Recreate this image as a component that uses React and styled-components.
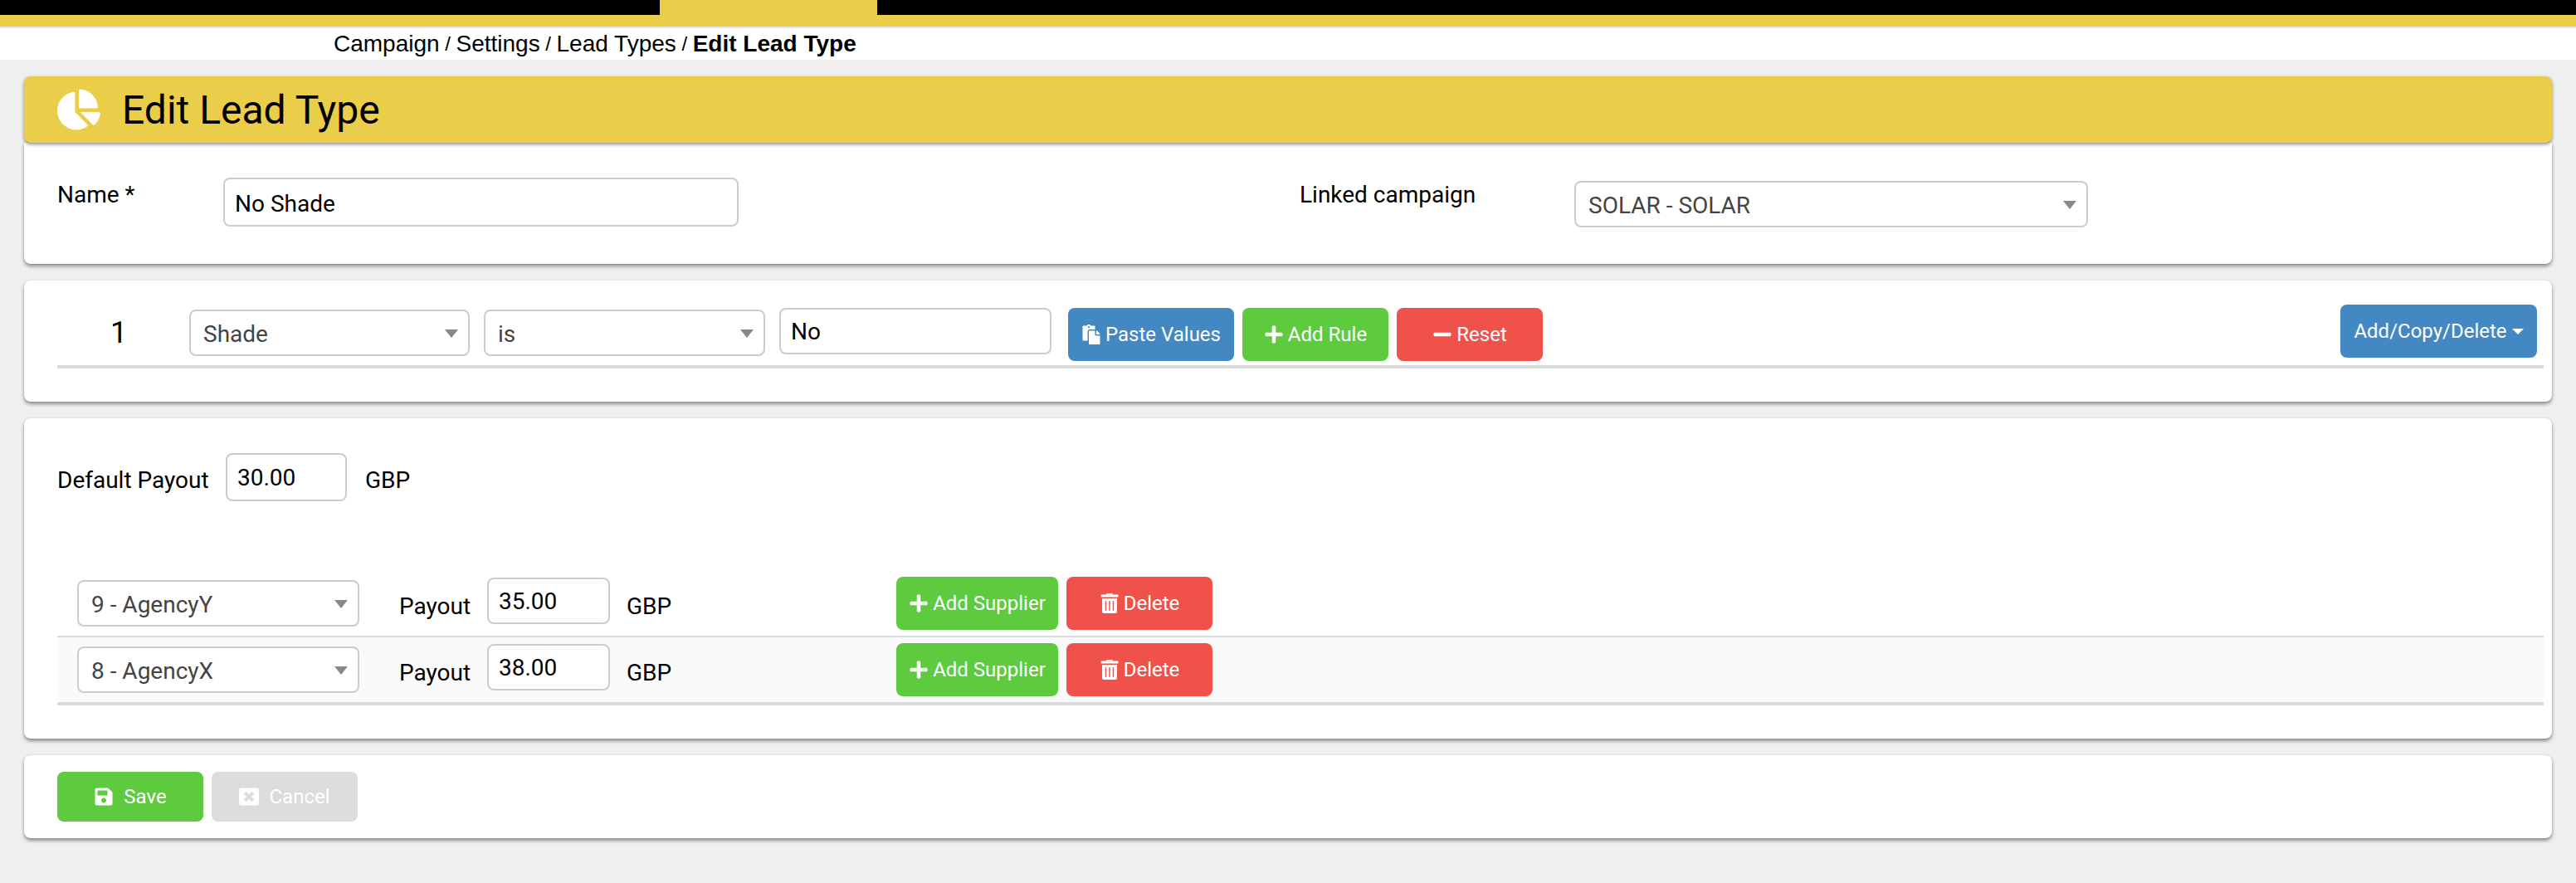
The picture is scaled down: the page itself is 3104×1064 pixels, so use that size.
import React from "react";
import styled, { createGlobalStyle } from "styled-components";
import { FaChartPie, FaPaste, FaPlus, FaMinus, FaTrashAlt, FaSave, FaWindowClose } from "react-icons/fa";

const Global = createGlobalStyle`
  html, body { margin: 0; padding: 0; background: #efefef; }
  * { box-sizing: border-box; }
`;

const YELLOW = "#eacd48";
const SANS = `"Liberation Sans", Arial, sans-serif`;
const ROBOTO = `Roboto, "Liberation Sans", sans-serif`;

const Page = styled.div`
  min-height: 1064px;
  background: #efefef;
  color: #000;
  font-family: ${ROBOTO};
  font-size: 28px;
`;
const TopBar = styled.div`
  display: flex;
  height: 18px;
  background: #000;
`;
const ActiveTab = styled.div`
  width: 262px;
  margin-left: 795px;
  background: ${YELLOW};
`;
const Strip = styled.div`
  height: 16px;
  background: ${YELLOW};
  border-bottom: 2px solid #e4e4e4;
`;
const Breadcrumb = styled.div`
  display: flex;
  align-items: center;
  gap: 6.6px;
  height: 38px;
  padding-left: 402px;
  background: #fff;
  font-family: ${SANS};
  font-size: 28px;
  white-space: nowrap;
`;
const Slash = styled.span`
  font-size: 24px;
`;
const Current = styled.strong`
  font-weight: 700;
`;
const Content = styled.div`
  padding: 20px 29px 0;
`;
const Heading = styled.div`
  position: relative;
  z-index: 1;
  display: flex;
  align-items: center;
  gap: 26px;
  height: 80px;
  padding-left: 40px;
  background: ${YELLOW};
  border-radius: 8px;
  box-shadow: 0 2px 4px rgba(0, 0, 0, 0.45);
  font-size: 52px;
  color: #fff;
`;
const Title = styled.h1`
  margin: 0;
  font-size: 48px;
  font-weight: 400;
  color: #000;
`;
const Panel = styled.section`
  margin-top: ${(p) => p.$gap}px;
  padding: 0 10px 0 40px;
  height: ${(p) => p.$h}px;
  background: #fff;
  border-radius: ${(p) => (p.$joined ? "0 0 8px 8px" : "8px")};
  box-shadow: 0 3px 4px rgba(0, 0, 0, 0.4), 0 0 3px rgba(0, 0, 0, 0.08);
`;
const NameRow = styled.div`
  display: flex;
  align-items: flex-start;
  padding-top: 42px;
`;
const FieldLabel = styled.label`
  flex: none;
  width: ${(p) => p.$w}px;
  margin-left: ${(p) => p.$ml || 0}px;
  padding-top: ${(p) => p.$pt || 0}px;
  line-height: 42px;
`;
const TextField = styled.input`
  flex: none;
  display: block;
  width: ${(p) => p.$w}px;
  height: ${(p) => p.$h || 56}px;
  margin: ${(p) => p.$m || 0};
  padding: ${(p) => p.$pt || 0}px 12px 0;
  border: 2px solid #cccccc;
  border-radius: 8px;
  background: #fff;
  outline: none;
  color: #000;
  font-family: ${ROBOTO};
  font-size: 28px;
`;
const SelectWrap = styled.div`
  position: relative;
  flex: none;
  width: ${(p) => p.$w}px;
  height: 56px;
  margin: ${(p) => p.$m || 0};
`;
const NativeSelect = styled.select`
  display: block;
  width: 100%;
  height: 100%;
  padding: 2px 15px 0;
  appearance: none;
  border: 2px solid #cccccc;
  border-radius: 8px;
  background: #fff;
  outline: none;
  color: #444;
  font-family: ${ROBOTO};
  font-size: 28px;
`;
const Caret = styled.span`
  position: absolute;
  top: 24px;
  right: 14px;
  width: 0;
  height: 0;
  border-left: 8px solid transparent;
  border-right: 8px solid transparent;
  border-top: 10px solid #888;
`;
const Dropdown = ({ value, w, m }) => (
  <SelectWrap $w={w} $m={m}>
    <NativeSelect defaultValue={value}>
      <option>{value}</option>
    </NativeSelect>
    <Caret />
  </SelectWrap>
);
const RuleRow = styled.div`
  display: flex;
  align-items: flex-start;
  height: 106px;
  padding-top: 29px;
  border-bottom: 4px solid #dadada;
`;
const RuleIndex = styled.div`
  flex: none;
  width: 148px;
  padding-top: 13px;
  text-align: center;
  font-size: 36px;
  line-height: 42px;
`;
const Btn = styled.button`
  flex: none;
  display: inline-flex;
  align-items: center;
  justify-content: center;
  gap: ${(p) => p.$gap || 5}px;
  width: ${(p) => p.$w}px;
  height: ${(p) => p.$h || 64}px;
  margin: ${(p) => p.$m || 0};
  padding: 0;
  border: 0;
  border-radius: 8px;
  background: ${(p) => p.$bg};
  color: #fff;
  font-family: ${ROBOTO};
  font-size: 24px;
  white-space: nowrap;
  svg { flex: none; font-size: 24px; }
`;
const CaretDown = styled.span`
  display: inline-block;
  width: 0;
  height: 0;
  margin-left: 1px;
  border-left: 7px solid transparent;
  border-right: 7px solid transparent;
  border-top: 7px solid #fff;
`;
const Spacer = styled.div`
  flex: 1;
`;
const DefaultRow = styled.div`
  display: flex;
  align-items: flex-start;
  padding-top: 42px;
  height: 190px;
`;
const Unit = styled.span`
  flex: none;
  width: ${(p) => p.$w || 60}px;
  margin-left: ${(p) => p.$ml}px;
  padding-top: ${(p) => p.$pt || 0}px;
  line-height: 42px;
`;
const PlainLabel = styled.span`
  flex: none;
  width: ${(p) => p.$w}px;
  margin-left: ${(p) => p.$ml || 0}px;
  padding-top: ${(p) => p.$pt || 0}px;
  line-height: 42px;
`;
const SupplierRow = styled.div`
  display: flex;
  align-items: flex-start;
  height: ${(p) => (p.$alt ? 82 : 74)}px;
  padding-top: ${(p) => (p.$alt ? 7 : 1)}px;
  background: ${(p) => (p.$alt ? "#fafafa" : "transparent")};
  border-bottom: ${(p) => (p.$alt ? 4 : 2)}px solid #dadada;
`;
const Footer = styled.div`
  display: flex;
  gap: 10px;
  padding-top: 20px;
`;

const Supplier = ({ name, payout, alt }) => (
  <SupplierRow $alt={alt}>
    <Dropdown value={name} w={340} m="4px 0 0 24px" />
    <PlainLabel $w={106} $ml={48} $pt={15}>Payout</PlainLabel>
    <TextField defaultValue={payout} $w={148} $m="1px 0 0 0" />
    <Unit $ml={20} $w={325} $pt={15}>GBP</Unit>
    <Btn $w={195} $bg="#5ecb3e"><FaPlus />Add Supplier</Btn>
    <Btn $w={176} $bg="#ef524b" $m="0 0 0 10px"><FaTrashAlt />Delete</Btn>
  </SupplierRow>
);

export default function App() {
  return (
    <Page>
      <Global />
      <TopBar><ActiveTab /></TopBar>
      <Strip />
      <Breadcrumb>
        <span>Campaign</span><Slash>/</Slash>
        <span>Settings</span><Slash>/</Slash>
        <span>Lead Types</span><Slash>/</Slash>
        <Current>Edit Lead Type</Current>
      </Breadcrumb>
      <Content>
        <Heading>
          <FaChartPie />
          <Title>Edit Lead Type</Title>
        </Heading>
        <Panel $joined $gap={0} $h={146}>
          <NameRow>
            <FieldLabel $w={200}>Name *</FieldLabel>
            <TextField defaultValue="No Shade" $w={621} $h={59} $pt={3} />
            <FieldLabel $w={331} $ml={676}>Linked campaign</FieldLabel>
            <Dropdown value="SOLAR - SOLAR" w={619} m="4px 0 0 0" />
          </NameRow>
        </Panel>
        <Panel $gap={20} $h={146}>
          <RuleRow>
            <RuleIndex>1</RuleIndex>
            <Dropdown value="Shade" w={338} m="6px 0 0 11px" />
            <Dropdown value="is" w={339} m="6px 0 0 17px" />
            <TextField defaultValue="No" $w={328} $m="4px 0 0 17px" />
            <Btn $w={200} $bg="#4488c3" $m="4px 0 0 20px"><FaPaste />Paste Values</Btn>
            <Btn $w={176} $bg="#5ecb3e" $m="4px 0 0 10px"><FaPlus />Add Rule</Btn>
            <Btn $w={176} $bg="#ef524b" $m="4px 0 0 10px"><FaMinus />Reset</Btn>
            <Spacer />
            <Btn $w={237} $bg="#4488c3" $m="0 8px 0 0">Add/Copy/Delete <CaretDown /></Btn>
          </RuleRow>
        </Panel>
        <Panel $gap={20} $h={386}>
          <DefaultRow>
            <PlainLabel $w={203} $pt={12}>Default Payout</PlainLabel>
            <TextField defaultValue="30.00" $w={146} $h={58} />
            <Unit $ml={22} $pt={12}>GBP</Unit>
          </DefaultRow>
          <Supplier name="9 - AgencyY" payout="35.00" />
          <Supplier name="8 - AgencyX" payout="38.00" alt />
        </Panel>
        <Panel $gap={20} $h={100}>
          <Footer>
            <Btn $w={176} $h={60} $gap={12} $bg="#5ecb3e"><FaSave />Save</Btn>
            <Btn $w={176} $h={60} $gap={12} $bg="#dcdcdc"><FaWindowClose />Cancel</Btn>
          </Footer>
        </Panel>
      </Content>
    </Page>
  );
}
